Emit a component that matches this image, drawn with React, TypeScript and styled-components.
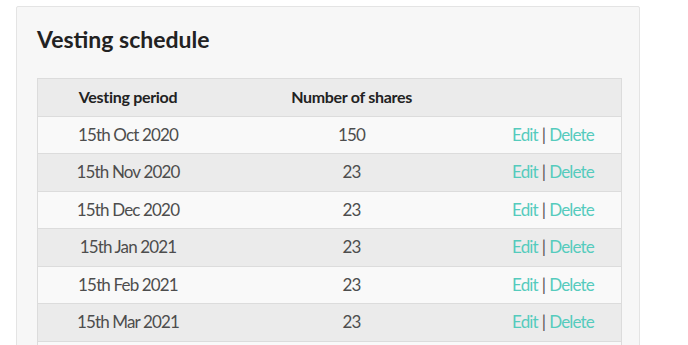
import React from "react";
import styled, { createGlobalStyle } from "styled-components";

const Global = createGlobalStyle`
  html, body { margin: 0; padding: 0; background: #ffffff; }
  body { font-family: Lato, "Open Sans", sans-serif; }
`;

const Page = styled.div`
  padding: 6px 0 0 16px;
`;

const Card = styled.section`
  box-sizing: border-box;
  width: 624px;
  background: #f7f7f7;
  border: 1px solid #e4e4e4;
  border-radius: 2px;
  padding: 19px 20px 20px 20px;
`;

const Title = styled.h2`
  margin: 0 0 25.6px 0;
  font-size: 23px;
  line-height: 26.4px;
  font-weight: 700;
  color: #222222;
`;

const Table = styled.table`
  width: 583px;
  border-collapse: collapse;
  border: 1px solid #dcdcdc;
  table-layout: fixed;
`;

const Row = styled.tr<{ $shade: boolean }>`
  background: ${(p) => (p.$shade ? "#ebebeb" : "#f9f9f9")};
  border-bottom: 1px solid #dcdcdc;
`;

const Th = styled.th<{ $w: number }>`
  width: ${(p) => p.$w}px;
  padding: 7px 0;
  font-size: 16px;
  line-height: 22.5px;
  font-weight: 700;
  letter-spacing: -0.3px;
  color: #222222;
  text-align: center;
`;

const Td = styled.td`
  padding: 7px 0;
  font-size: 17px;
  line-height: 22.5px;
  font-weight: 400;
  letter-spacing: -0.85px;
  color: #4d4d4d;
  text-align: center;
`;

const Action = styled.a`
  color: #55cbbd;
  text-decoration: none;
  cursor: pointer;
`;

const Sep = styled.span`
  color: #555555;
  margin: 0 4px;
`;

const rows = [
  ["15th Oct 2020", "150"],
  ["15th Nov 2020", "23"],
  ["15th Dec 2020", "23"],
  ["15th Jan 2021", "23"],
  ["15th Feb 2021", "23"],
  ["15th Mar 2021", "23"],
  ["15th Apr 2021", "23"],
];

export default function App() {
  return (
    <>
      <Global />
      <Page>
        <Card>
          <Title>Vesting schedule</Title>
          <Table>
            <thead>
              <Row $shade>
                <Th $w={180}>Vesting period</Th>
                <Th $w={267}>Number of shares</Th>
                <Th $w={136}></Th>
              </Row>
            </thead>
            <tbody>
              {rows.map(([d, n], i) => (
                <Row key={d} $shade={i % 2 === 1}>
                  <Td>{d}</Td>
                  <Td>{n}</Td>
                  <Td>
                    <Action>Edit</Action>
                    <Sep>|</Sep>
                    <Action>Delete</Action>
                  </Td>
                </Row>
              ))}
            </tbody>
          </Table>
        </Card>
      </Page>
    </>
  );
}
